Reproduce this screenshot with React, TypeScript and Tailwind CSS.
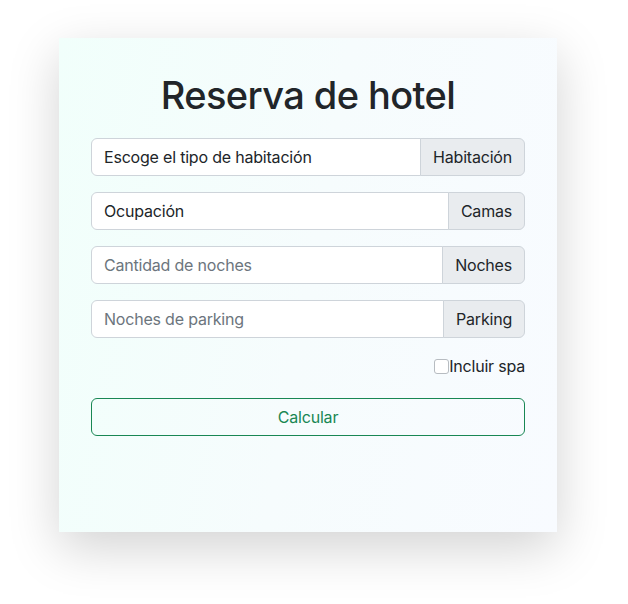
const FONT = 'font-["Inter","Liberation_Sans",sans-serif]'

type Row = { value?: string; placeholder?: string; addon: string }

const rows: Row[] = [
  { value: 'Escoge el tipo de habitación', addon: 'Habitación' },
  { value: 'Ocupación', addon: 'Camas' },
  { placeholder: 'Cantidad de noches', addon: 'Noches' },
  { placeholder: 'Noches de parking', addon: 'Parking' },
]

function InputGroup({ row }: { row: Row }) {
  return (
    <div className="flex h-[38px] w-full">
      <input
        readOnly
        defaultValue={row.value}
        placeholder={row.placeholder}
        className={`min-w-0 flex-1 rounded-l-[6px] border border-[#ced4da] bg-white px-3 text-[16px] tracking-[-0.2px] text-[#212529] outline-none placeholder:text-[#6c757d] ${FONT}`}
      />
      <span className="-ml-px flex items-center rounded-r-[6px] border border-[#ced4da] bg-[#e9ecef] px-3 text-[16px] tracking-[-0.2px] text-[#212529]">
        {row.addon}
      </span>
    </div>
  )
}

export default function App() {
  return (
    <div className={`min-h-[604px] bg-white pt-[38px] ${FONT}`}>
      <div className="ml-[59px] h-[494px] w-[498px] bg-[linear-gradient(100deg,#f1fffb_0%,#f6fcfd_50%,#f8fbff_100%)] px-8 pt-[34px] shadow-[0_16px_48px_rgba(0,0,0,0.175)]">
        <h1 className="mb-[20px] text-center text-[38px] leading-[46px] font-medium tracking-[-0.6px] text-[#212529]">
          Reserva de hotel
        </h1>

        {/* Form fields */}
        <div className="flex flex-col gap-4">
          {rows.map((r) => (
            <InputGroup key={r.addon} row={r} />
          ))}
        </div>

        <label className="mt-4 flex h-6 items-center justify-end text-[16px] tracking-[-0.2px] text-[#212529]">
          <span className="h-[15px] w-[15px] rounded-[3px] border border-[#b7bcc1] bg-white" />
          Incluir spa
        </label>

        <button className="mt-5 h-[38px] w-full rounded-[6px] border border-[#198754] text-[16px] tracking-[-0.2px] text-[#198754]">
          Calcular
        </button>
      </div>
    </div>
  )
}
